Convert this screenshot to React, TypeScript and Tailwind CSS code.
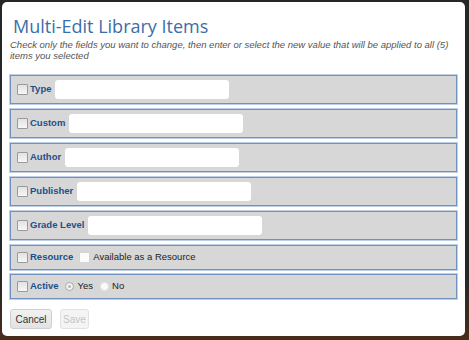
import React from "react"

const fields = [
  { label: "Type" },
  { label: "Custom" },
  { label: "Author" },
  { label: "Publisher" },
  { label: "Grade Level" },
]

function Check({ light }: { light?: boolean }) {
  return (
    <span
      className={
        light
          ? "inline-block w-[11px] h-[11px] shrink-0 border border-[#d4d4d4] bg-[#fbfbfb] rounded-[1px]"
          : "inline-block w-[11px] h-[11px] shrink-0 border border-[#9a9a9a] bg-gradient-to-b from-[#e2e2e2] to-[#f7f7f7] rounded-[1px]"
      }
    />
  )
}

function Radio({ checked }: { checked?: boolean }) {
  return (
    <span
      className={
        checked
          ? "flex items-center justify-center w-[9px] h-[9px] shrink-0 rounded-full border border-[#a8a8a8] bg-[#f4f4f4]"
          : "flex items-center justify-center w-[9px] h-[9px] shrink-0 rounded-full border border-[#e4e4e4] bg-[#fafafa]"
      }
    >
      {checked && <span className="w-[3px] h-[3px] rounded-full bg-[#b5b5b5]" />}
    </span>
  )
}

function Row({ children, tall }: { children: React.ReactNode; tall?: boolean }) {
  return (
    <div
      className={
        "flex items-center pl-[6px] bg-[#d7d7d7] border border-[#6f92bf] shadow-[0_0_0_1px_#bfd0e6] " +
        (tall ? "h-[29px]" : "h-[25px]")
      }
    >
      {children}
    </div>
  )
}

export default function App() {
  return (
    <div className="w-[469px] h-[340px] pl-[2px] pt-[2px] bg-[linear-gradient(to_bottom,#262626_80%,#4a2b1b)]">
      <div className="w-[463px] h-[334px] bg-white rounded-[5px] px-[8px] font-['Liberation_Sans',Arial,sans-serif]">
        <h1 className="pt-[15px] pl-[3px] text-[18px] leading-[18px] text-[#3a6ea8] font-['Open_Sans',sans-serif] font-normal">
          Multi-Edit Library Items
        </h1>
        <p className="mt-[4px] text-[9.5px] leading-[11px] italic text-[#555] whitespace-nowrap">
          Check only the fields you want to change, then enter or select the new value that will be applied to all (5)
          <br />
          items you selected
        </p>

        <div className="mt-[14px] flex flex-col gap-[5px]">
          {fields.map((f) => (
            <Row key={f.label} tall>
              <Check />
              <span className="ml-[2px] text-[9.5px] font-bold text-[#1d4f8c]">{f.label}</span>
              <span className="ml-[4px] w-[174px] h-[19px] bg-white rounded-[3px]" />
            </Row>
          ))}
          <div className="flex flex-col gap-[4px]">
            <Row>
              <Check />
              <span className="ml-[2px] text-[9.5px] font-bold text-[#1d4f8c]">Resource</span>
              <span className="ml-[6px]">
                <Check light />
              </span>
              <span className="ml-[3px] text-[9.5px] text-[#222]">Available as a Resource</span>
            </Row>
            <Row>
              <Check />
              <span className="ml-[2px] text-[9.5px] font-bold text-[#1d4f8c]">Active</span>
              <span className="ml-[6px]">
                <Radio checked />
              </span>
              <span className="ml-[4px] text-[9.5px] text-[#222]">Yes</span>
              <span className="ml-[7px]">
                <Radio />
              </span>
              <span className="ml-[3px] text-[9.5px] text-[#222]">No</span>
            </Row>
          </div>
        </div>

        <div className="mt-[10px] flex gap-[8px]">
          <button className="w-[42px] h-[20px] rounded-[3px] border border-[#cfcfcf] bg-gradient-to-b from-[#f2f2f2] to-[#e2e2e2] text-[10px] text-[#333]">
            Cancel
          </button>
          <button
            disabled
            className="w-[29px] h-[20px] rounded-[3px] border border-[#e2e2e2] bg-[#f4f4f4] text-[10px] text-[#c4c4c4]"
          >
            Save
          </button>
        </div>
      </div>
    </div>
  )
}
